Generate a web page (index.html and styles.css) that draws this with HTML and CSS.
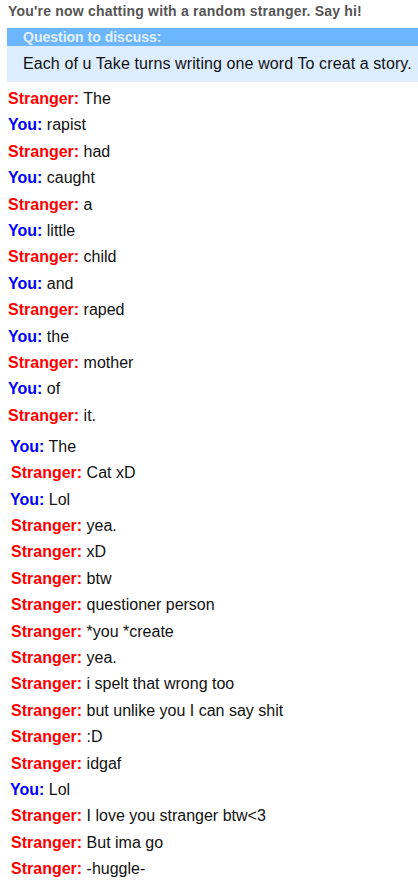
FILE: index.html
```html
<!DOCTYPE html>
<html lang="en">
<head>
  <meta charset="UTF-8">
  <meta name="viewport" content="width=device-width, initial-scale=1.0">
  <title>Omegle</title>
  <link rel="stylesheet" href="styles.css">
</head>
<body>
  <div class="chat-log">
    <p class="status">You're now chatting with a random stranger. Say hi!</p>

    <!-- Question box -->
    <div class="question">
      <div class="question-head">Question to discuss:</div>
      <div class="question-body">Each of u Take turns writing one word To creat a story.</div>
    </div>

    <div class="log">
      <p class="logitem"><strong class="stranger">Stranger:</strong> The</p>
      <p class="logitem"><strong class="you">You:</strong> rapist</p>
      <p class="logitem"><strong class="stranger">Stranger:</strong> had</p>
      <p class="logitem"><strong class="you">You:</strong> caught</p>
      <p class="logitem"><strong class="stranger">Stranger:</strong> a</p>
      <p class="logitem"><strong class="you">You:</strong> little</p>
      <p class="logitem"><strong class="stranger">Stranger:</strong> child</p>
      <p class="logitem"><strong class="you">You:</strong> and</p>
      <p class="logitem"><strong class="stranger">Stranger:</strong> raped</p>
      <p class="logitem"><strong class="you">You:</strong> the</p>
      <p class="logitem"><strong class="stranger">Stranger:</strong> mother</p>
      <p class="logitem"><strong class="you">You:</strong> of</p>
      <p class="logitem"><strong class="stranger">Stranger:</strong> it.</p>
    </div>

    <!-- second screenshot, stitched below -->
    <div class="log log-second">
      <p class="logitem shift-sm"><strong class="you">You:</strong> The</p>
      <p class="logitem"><strong class="stranger">Stranger:</strong> Cat xD</p>
      <p class="logitem shift-sm"><strong class="you">You:</strong> Lol</p>
      <p class="logitem"><strong class="stranger">Stranger:</strong> yea.</p>
      <p class="logitem"><strong class="stranger">Stranger:</strong> xD</p>
      <p class="logitem"><strong class="stranger">Stranger:</strong> btw</p>
      <p class="logitem"><strong class="stranger">Stranger:</strong> questioner person</p>
      <p class="logitem"><strong class="stranger">Stranger:</strong> *you *create</p>
      <p class="logitem"><strong class="stranger">Stranger:</strong> yea.</p>
      <p class="logitem"><strong class="stranger">Stranger:</strong> i spelt that wrong too</p>
      <p class="logitem"><strong class="stranger">Stranger:</strong> but unlike you I can say shit</p>
      <p class="logitem"><strong class="stranger">Stranger:</strong> :D</p>
      <p class="logitem"><strong class="stranger">Stranger:</strong> idgaf</p>
      <p class="logitem shift-sm"><strong class="you">You:</strong> Lol</p>
      <p class="logitem"><strong class="stranger">Stranger:</strong> I love you stranger btw&lt;3</p>
      <p class="logitem"><strong class="stranger">Stranger:</strong> But ima go</p>
      <p class="logitem"><strong class="stranger">Stranger:</strong> -huggle-</p>
    </div>
  </div>
</body>
</html>
```

FILE: styles.css
```css
/* General Styling */
body {
  margin: 0;
  padding: 0;
  background: #fff;
  font-family: 'Liberation Sans', Arial, sans-serif;
  color: #000;
}

.chat-log {
  padding: 3px 0 0 8px;
}

p {
  margin: 0;
}

.status {
  font-size: 14px;
  font-weight: bold;
  line-height: 16px;
  letter-spacing: 0.2px;
  color: #555;
  margin-bottom: 9px;
}

/* Question box */
.question {
  margin-left: -1px;
}

.question-head {
  background: #6cb5ff;
  color: #e3f1ff;
  font-size: 14px;
  font-weight: bold;
  line-height: 18px;
  padding-left: 16px;
}

.question-body {
  background: #dcedff;
  font-size: 16px;
  line-height: 36px;
  letter-spacing: 0.1px;
  padding-left: 16px;
  color: #111;
  white-space: nowrap;
}

/* Messages */
.log {
  padding-top: 4px;
}

.log-second {
  padding-top: 4.5px;
  padding-left: 3px;
}

.logitem {
  font-size: 16px;
  line-height: 18.4px;
  padding: 4px 0;
  color: #111;
}

.shift-sm {
  margin-left: -1px;
}

.stranger {
  color: #f00;
}

.you {
  color: #00f;
}
```
